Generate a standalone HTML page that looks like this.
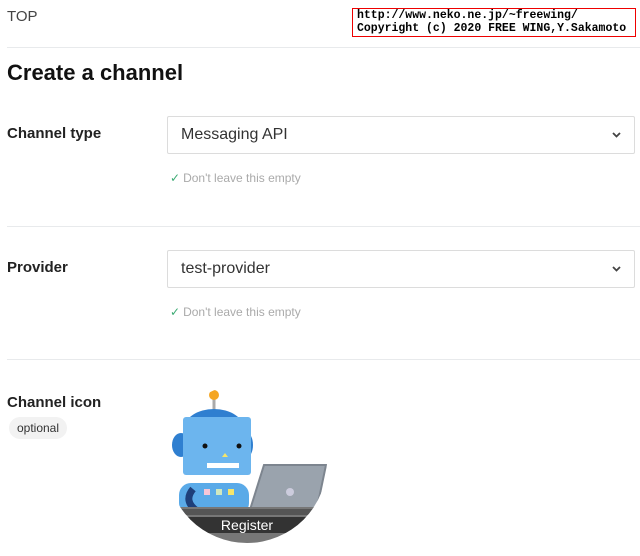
<!DOCTYPE html>
<html><head><style>
body{margin:0;width:640px;height:556px;background:#fff;font-family:"Liberation Sans",sans-serif;position:relative;overflow:hidden;color:#111}
.a{position:absolute}
.hr{position:absolute;left:7px;right:0;height:1px;background:#e8eaec}
.lbl{position:absolute;left:7px;font-size:15px;font-weight:bold;color:#222}
.sel{position:absolute;left:167px;width:468px;height:38px;border:1px solid #dcdcdc;border-radius:2px;box-sizing:border-box}
.sel span{position:absolute;left:13px;top:9px;font-size:16px;color:#333}
.sel svg{position:absolute;right:13px;top:15px}
.chk{position:absolute;left:170px;font-size:12px;color:#aaa}
.chk b{color:#3dab74;font-weight:normal;margin-right:3px}
</style></head><body>
<div class="a" style="left:7px;top:8px;font-size:15px;color:#444">TOP</div>
<div class="a" style="left:352px;top:8px;width:278px;height:27px;border:1px solid #e00;font-family:'Liberation Mono',monospace;font-size:11.5px;line-height:13px;font-weight:bold;color:#000;padding-left:4px;white-space:pre;overflow:hidden">http://www.neko.ne.jp/~freewing/
Copyright (c) 2020 FREE WING,Y.Sakamoto</div>
<div class="hr" style="top:47px"></div>
<div class="a" style="left:7px;top:60px;font-size:22px;font-weight:bold;color:#111">Create a channel</div>
<div class="lbl" style="top:125px">Channel type</div>
<div class="sel" style="top:116px"><span>Messaging API</span><svg width="9" height="6"><path d="M1 1 L4.5 4.5 L8 1" stroke="#444" stroke-width="1.8" fill="none"/></svg></div>
<div class="chk" style="top:171px"><b>✓</b>Don't leave this empty</div>
<div class="hr" style="top:226px"></div>
<div class="lbl" style="top:259px">Provider</div>
<div class="sel" style="top:250px"><span>test-provider</span><svg width="9" height="6"><path d="M1 1 L4.5 4.5 L8 1" stroke="#444" stroke-width="1.8" fill="none"/></svg></div>
<div class="chk" style="top:305px"><b>✓</b>Don't leave this empty</div>
<div class="hr" style="top:359px"></div>
<div class="lbl" style="top:394px">Channel icon</div>
<div class="a" style="left:9px;top:417px;width:58px;height:22px;border-radius:11px;background:#f2f2f2;font-size:12px;color:#333;text-align:center;line-height:22px">optional</div>
<svg class="a" style="left:167px;top:385px" width="162" height="160" viewBox="0 0 162 160">
<defs><clipPath id="c"><circle cx="80" cy="78" r="80"/></clipPath></defs>
<g clip-path="url(#c)">
<rect x="0" y="0" width="162" height="160" fill="#fff"/>
<line x1="47" y1="12" x2="47" y2="28" stroke="#aaa" stroke-width="3"/>
<circle cx="47" cy="10" r="5" fill="#f5a623"/>
<ellipse cx="47" cy="44" rx="30" ry="20" fill="#2f7fd0"/>
<ellipse cx="14" cy="60" rx="9" ry="12" fill="#2f7fd0"/>
<ellipse cx="80" cy="60" rx="6" ry="12" fill="#2f7fd0"/>
<rect x="12" y="98" width="70" height="32" rx="12" fill="#5aaae8"/>
<rect x="16" y="32" width="68" height="58" rx="3" fill="#6cb5ee"/>
<circle cx="38" cy="61" r="2.5" fill="#111"/><circle cx="72" cy="61" r="2.5" fill="#111"/>
<path d="M55 72 L58 68 L61 72 Z" fill="#f5e56b"/>
<rect x="40" y="78" width="32" height="5" fill="#fff"/>
<rect x="37" y="104" width="6" height="6" fill="#f6c6d8"/><rect x="49" y="104" width="6" height="6" fill="#cfe8c0"/><rect x="61" y="104" width="6" height="6" fill="#f5e56b"/>
<path d="M26 104 Q16 116 30 126" stroke="#1e3f7a" stroke-width="7" fill="none"/>
<path d="M97 80 L159 80 L149 128 L82 128 Z" fill="#9aa3ad" stroke="#7d858f" stroke-width="2"/>
<circle cx="123" cy="107" r="4" fill="#ccd"/>
<rect x="0" y="122" width="162" height="40" fill="#777"/>
<rect x="4" y="124" width="152" height="6" fill="#555"/>
<rect x="8" y="132" width="146" height="16" fill="#333"/>
<text x="80" y="145" text-anchor="middle" font-family="Liberation Sans,sans-serif" font-size="14" fill="#fff">Register</text>
</g></svg>
</body></html>
